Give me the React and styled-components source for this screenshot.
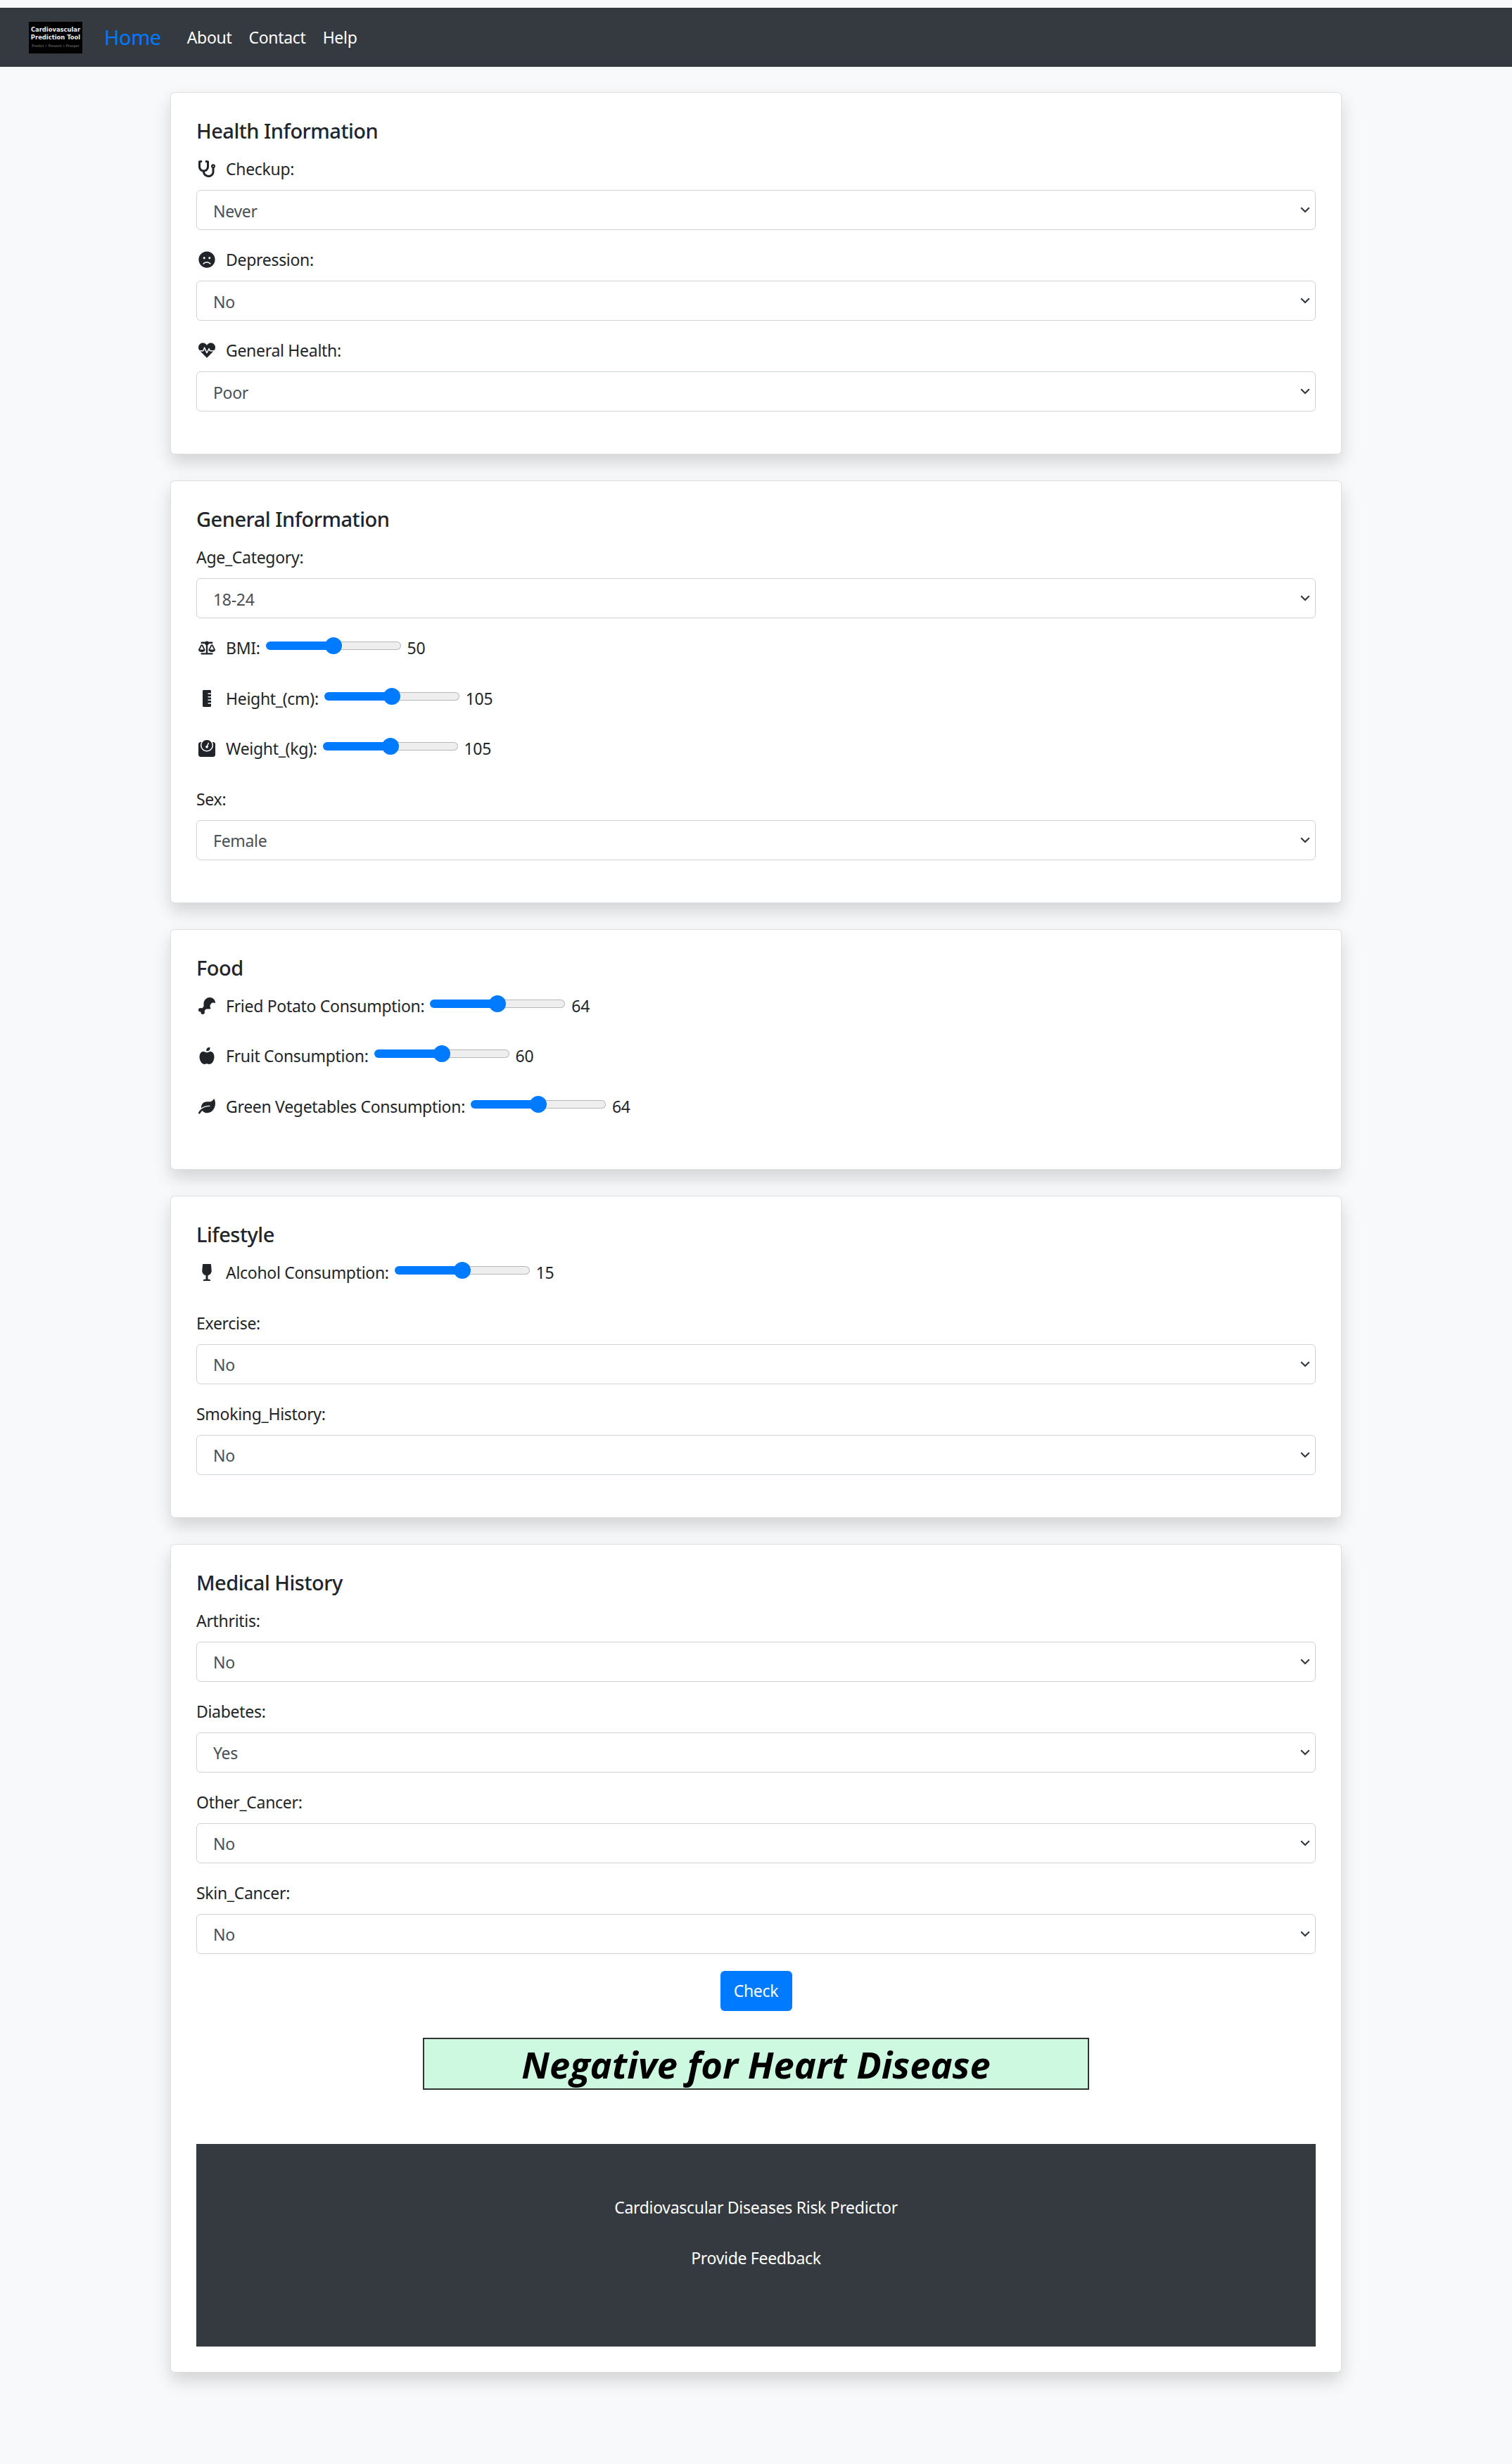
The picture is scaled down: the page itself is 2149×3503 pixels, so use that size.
import React from "react";
import styled, { createGlobalStyle } from "styled-components";
import {
  FaAppleAlt,
  FaBalanceScale,
  FaDrumstickBite,
  FaFrown,
  FaHeartbeat,
  FaLeaf,
  FaRulerVertical,
  FaStethoscope,
  FaWeight,
  FaWineGlass,
} from "react-icons/fa";

const GlobalStyle = createGlobalStyle`
  * {
    box-sizing: border-box;
  }
  body {
    margin: 0;
    background: #f8f9fa;
    color: #212529;
    font-family: "Noto Sans", "Liberation Sans", sans-serif;
    font-size: 23px;
    letter-spacing: -0.3px;
    line-height: 36px;
  }
`;

const Page = styled.div`
  min-height: 100vh;
  padding: 11px 0 131px;
`;

const Navbar = styled.nav`
  height: 84px;
  background: #343a40;
  display: flex;
  align-items: center;
  padding-left: 41px;
`;

const Logo = styled.div`
  width: 76px;
  height: 45px;
  background: #000;
  color: #eee;
  font-family: "DejaVu Sans", sans-serif;
  font-weight: 700;
  font-size: 8.4px;
  letter-spacing: 0;
  line-height: 11px;
  display: flex;
  flex-direction: column;
  align-items: center;
  padding-top: 6px;
`;

const LogoTag = styled.span`
  font-size: 5px;
  font-weight: 400;
  line-height: 13px;
  color: #8a8a8a;
`;

const Brand = styled.a`
  color: #007bff;
  font-size: 29px;
  letter-spacing: -0.45px;
  margin: 0 37px 0 31px;
`;

const NavLink = styled.a`
  color: #fff;
  margin-right: 24px;
`;

const Main = styled.main`
  width: 1665px;
  margin: 36px auto 0;
  display: flex;
  flex-direction: column;
  gap: 37px;
`;

const Card = styled.section`
  background: #fff;
  border: 1px solid rgba(0, 0, 0, 0.125);
  border-radius: 6px;
  box-shadow: 0 12px 24px rgba(0, 0, 0, 0.15);
  padding: 36px;
`;

const Title = styled.h5`
  margin: 0 0 18px;
  font-size: 29px;
  letter-spacing: -0.5px;
  line-height: 36px;
  font-weight: 500;
`;

const Field = styled.div`
  margin-bottom: 24px;
`;

const Label = styled.label`
  display: flex;
  align-items: center;
  height: 36px;
  margin-bottom: 12px;
`;

const IconSlot = styled.span`
  width: 30px;
  height: 24px;
  margin-right: 12px;
  display: flex;
  justify-content: center;
  flex: none;

  svg {
    flex: none;
    height: 24px;
    width: auto;
  }
`;

const SelectWrap = styled.div`
  position: relative;
`;

const Select = styled.select`
  display: block;
  width: 100%;
  height: 57px;
  appearance: none;
  background: #fff;
  border: 1.5px solid #ced4da;
  border-radius: 6px;
  padding: 2px 0 0 23px;
  color: #495057;
  font: inherit;
  letter-spacing: inherit;
`;

const Chevron = styled.svg`
  position: absolute;
  right: 8px;
  top: 24px;
  width: 14px;
  height: 9px;
  pointer-events: none;
`;

const SliderRow = styled.div`
  display: flex;
  align-items: center;
  height: 36px;
  margin-bottom: 35.5px;
`;

const SliderText = styled.label`
  display: flex;
  align-items: center;
`;

const Range = styled.input`
  appearance: none;
  width: 192px;
  height: 12px;
  margin: 0 9px 6px 8px;
  padding: 0;
  border: 1px solid transparent;
  border-radius: 6px;
  background:
    linear-gradient(90deg, #007bff ${(props) => props.$pct}%, transparent ${(props) => props.$pct}%) border-box,
    linear-gradient(#eee, #eee) padding-box,
    linear-gradient(#b8b8b8, #b8b8b8) border-box;

  &::-webkit-slider-runnable-track {
    height: 10px;
  }
  &::-webkit-slider-thumb {
    appearance: none;
    width: 24px;
    height: 24px;
    margin-top: -7px;
    border-radius: 50%;
    background: #007bff;
  }
`;

const CheckRow = styled.div`
  display: flex;
  justify-content: center;
`;

const CheckButton = styled.button`
  width: 102px;
  height: 57px;
  border: 0;
  border-radius: 6px;
  background: #007bff;
  color: #fff;
  font: inherit;
  letter-spacing: inherit;
`;

const Result = styled.div`
  width: 947px;
  height: 74px;
  margin: 38px auto 77px;
  background: #cdf9e0;
  border: 2px solid #333;
  color: #000;
  font-family: "Open Sans", sans-serif;
  font-weight: 700;
  font-style: italic;
  font-size: 52.5px;
  letter-spacing: 0;
  line-height: 72px;
  text-align: center;
`;

const Footer = styled.footer`
  background: #343a40;
  color: #fff;
  text-align: center;
  padding: 72px 0;
`;

const FooterLine = styled.p`
  margin: 0 0 36px;
`;

const SelectField = ({ label, icon: Icon, options }) => (
  <Field>
    <Label>
      {Icon && (
        <IconSlot>
          <Icon />
        </IconSlot>
      )}
      {label}:
    </Label>
    <SelectWrap>
      <Select defaultValue={options[0]} aria-label={label}>
        {options.map((option) => (
          <option key={option}>{option}</option>
        ))}
      </Select>
      <Chevron viewBox="0 0 14 9" fill="none" stroke="#343a40" strokeWidth="2.2">
        <path d="M1.2 1.2 7 7l5.8-5.8" />
      </Chevron>
    </SelectWrap>
  </Field>
);

const SliderField = ({ label, icon: Icon, value }) => (
  <SliderRow>
    <SliderText>
      <IconSlot>
        <Icon />
      </IconSlot>
      {label}:
    </SliderText>
    <Range type="range" min="0" max="100" defaultValue="50" $pct={50} aria-label={label} />
    {value}
  </SliderRow>
);

const YES_NO = ["No", "Yes"];

const App = () => {
  return (
    <Page>
      <GlobalStyle />
      <Navbar>
        <Logo>
          <span>Cardiovascular</span>
          <span>Prediction Tool</span>
          <LogoTag>Predict • Prevent • Prosper</LogoTag>
        </Logo>
        <Brand>Home</Brand>
        <NavLink>About</NavLink>
        <NavLink>Contact</NavLink>
        <NavLink>Help</NavLink>
      </Navbar>
      <Main>
        <Card>
          <Title>Health Information</Title>
          <SelectField label="Checkup" icon={FaStethoscope} options={["Never", "Within the past year", "Within the past 2 years"]} />
          <SelectField label="Depression" icon={FaFrown} options={YES_NO} />
          <SelectField label="General Health" icon={FaHeartbeat} options={["Poor", "Fair", "Good", "Very Good", "Excellent"]} />
        </Card>
        <Card>
          <Title>General Information</Title>
          <SelectField label="Age_Category" options={["18-24", "25-29", "30-34", "35-39"]} />
          <SliderField label="BMI" icon={FaBalanceScale} value={50} />
          <SliderField label="Height_(cm)" icon={FaRulerVertical} value={105} />
          <SliderField label="Weight_(kg)" icon={FaWeight} value={105} />
          <SelectField label="Sex" options={["Female", "Male"]} />
        </Card>
        <Card>
          <Title>Food</Title>
          <SliderField label="Fried Potato Consumption" icon={FaDrumstickBite} value={64} />
          <SliderField label="Fruit Consumption" icon={FaAppleAlt} value={60} />
          <SliderField label="Green Vegetables Consumption" icon={FaLeaf} value={64} />
        </Card>
        <Card>
          <Title>Lifestyle</Title>
          <SliderField label="Alcohol Consumption" icon={FaWineGlass} value={15} />
          <SelectField label="Exercise" options={YES_NO} />
          <SelectField label="Smoking_History" options={YES_NO} />
        </Card>
        <Card>
          <Title>Medical History</Title>
          <SelectField label="Arthritis" options={YES_NO} />
          <SelectField label="Diabetes" options={["Yes", "No"]} />
          <SelectField label="Other_Cancer" options={YES_NO} />
          <SelectField label="Skin_Cancer" options={YES_NO} />
          <CheckRow>
            <CheckButton>Check</CheckButton>
          </CheckRow>
          <Result>Negative for Heart Disease</Result>
          <Footer>
            <FooterLine>Cardiovascular Diseases Risk Predictor</FooterLine>
            <FooterLine>Provide Feedback</FooterLine>
          </Footer>
        </Card>
      </Main>
    </Page>
  );
};

export default App;
